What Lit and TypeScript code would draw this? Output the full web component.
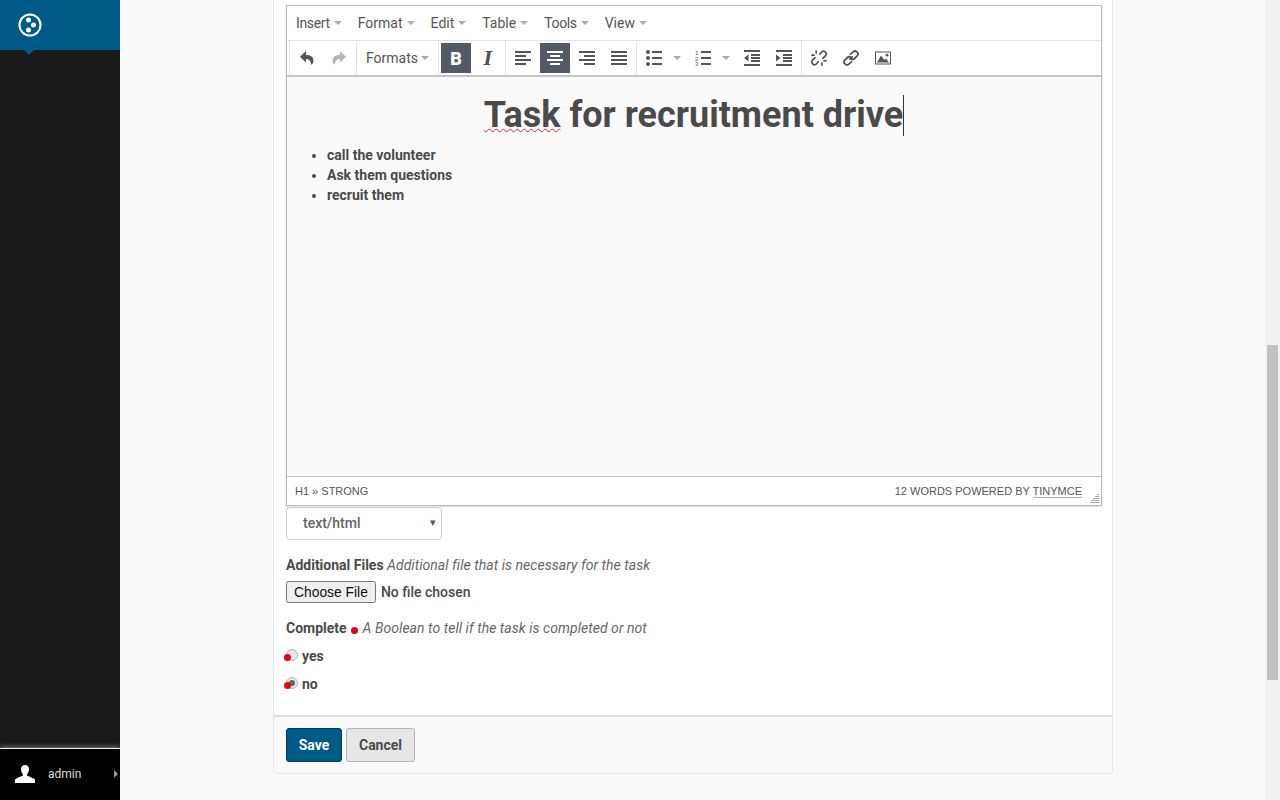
import { LitElement, html, css, svg } from 'lit';
import { customElement } from 'lit/decorators.js';

// toolbar glyphs, all on a 16x16 box
const lines = (rows: number[][]) =>
    rows.map(([x, y, w]) => svg`<rect x=${x} y=${y} width=${w} height="2"></rect>`);

const icons: Record<string, unknown> = {
    undo: svg`<path d="M7 1 1 6.800 7 12.500V9c2.800 0 4.500 1.500 5.500 6 1.900-2 2.400-4.200 1.700-6.300C13.300 6 10.600 4.800 7 5z"></path>`,
    redo: svg`<path d="M9 1 15 6.800 9 12.500V9c-2.800 0-4.500 1.500-5.500 6-1.900-2-2.400-4.200-1.700-6.300C2.700 6 5.400 4.800 9 5z"></path>`,
    left: lines([[0, 1, 16], [0, 5, 11], [0, 9, 16], [0, 13, 11]]),
    center: lines([[0, 1, 16], [3, 5, 10], [0, 9, 16], [3, 13, 10]]),
    right: lines([[0, 1, 16], [5, 5, 11], [0, 9, 16], [5, 13, 11]]),
    justify: lines([[0, 1, 16], [0, 5, 16], [0, 9, 16], [0, 13, 16]]),
    bullets: svg`<circle cx="2" cy="2" r="2"></circle><circle cx="2" cy="8" r="2"></circle><circle cx="2" cy="14" r="2"></circle>${lines([[6, 1, 10], [6, 7, 10], [6, 13, 10]])}`,
    numbers: svg`<text x="0" y="5" font-size="6" font-family="Liberation Sans">1</text><text x="0" y="10.500" font-size="6" font-family="Liberation Sans">2</text><text x="0" y="16" font-size="6" font-family="Liberation Sans">3</text>${lines([[6, 1, 10], [6, 7, 10], [6, 13, 10]])}`,
    outdent: svg`${lines([[0, 0, 16], [7, 4, 9], [7, 7, 9], [7, 10, 9], [0, 14, 16]])}<path d="M0 8 4.500 4.500v7z"></path>`,
    indent: svg`${lines([[0, 0, 16], [7, 4, 9], [7, 7, 9], [7, 10, 9], [0, 14, 16]])}<path d="M4.500 8 0 4.500v7z"></path>`,
    unlink: svg`<g fill="none" stroke="#555" stroke-width="1.700" stroke-linecap="round"><path d="M8.800 4.300 10.600 2.200a2.700 2.700 0 0 1 3.700-.2 2.700 2.700 0 0 1 .1 3.800L12 8.300"></path><path d="M7.200 11.700 5.400 13.800a2.700 2.700 0 0 1-3.700.2 2.700 2.700 0 0 1-.1-3.800L4 7.700"></path><path d="M5.200 1v2M1 5.200h2M10.800 15v-2M15 10.800h-2"></path></g>`,
    link: svg`<g fill="none" stroke="#555" stroke-width="1.800" stroke-linecap="round"><path d="M7 9 9.200 6.800"></path><path d="M7.500 4.200 10.200 1.800a2.500 2.500 0 0 1 3.500 0l.5.500a2.500 2.500 0 0 1 0 3.500L11.500 8.500a2.500 2.500 0 0 1-3 .4"></path><path d="M8.500 11.800 5.800 14.200a2.500 2.500 0 0 1-3.500 0l-.5-.5a2.500 2.500 0 0 1 0-3.500L4.500 7.500a2.500 2.500 0 0 1 3-.4"></path></g>`,
    image: svg`<path fill-rule="evenodd" d="M0 1.500h16v13H0zM1 2.500v11h14v-11z"></path><path d="M2 12.500 6 5.500l3.500 4.500 1.500-1.500 3 4z"></path><circle cx="12" cy="5.200" r="1.400"></circle>`,
};

@customElement('app-root')
export class AppRoot extends LitElement {
    static styles = css`
        :host {
            display: flex;
            height: 800px;
            overflow: hidden;
            background: #fafafa;
            font-family: Roboto, "Liberation Sans", sans-serif;
            font-size: 14px;
            color: #4a4a4a;
        }

        /* sidebar */
        .sidebar {
            width: 120px;
            flex: none;
            display: flex;
            flex-direction: column;
            background: #191919;
        }
        .brand {
            position: relative;
            height: 50px;
            background: #005a87;
            display: flex;
            align-items: center;
            padding-left: 18px;
        }
        .brand::after {
            content: "";
            position: absolute;
            left: 24px;
            top: 50px;
            border: 5px solid transparent;
            border-top-color: #005a87;
            border-bottom: 0;
        }
        .user {
            margin-top: auto;
            height: 49px;
            padding-bottom: 2px;
            background: #000;
            border-top: 1px solid #eee;
            box-shadow: 0 -1px 5px rgba(255, 255, 255, 0.45);
            display: flex;
            align-items: center;
            padding-left: 15px;
            color: #ddd;
            font-size: 12px;
        }
        .user span {
            margin-left: 13px;
        }
        .user .arrow {
            margin-left: auto;
            margin-right: 2px;
            border: 4px solid transparent;
            border-left: 4px solid #999;
            border-right: 0;
        }

        /* page */
        .main {
            flex: 1;
            min-width: 0;
            padding-left: 153px;
        }
        .card {
            width: 838px;
            height: 773px;
            background: #fff;
            border: 1px solid #e8e8e8;
            border-top: 0;
            border-radius: 0 0 4px 4px;
            display: flex;
            flex-direction: column;
        }
        .form {
            flex: 1;
            padding: 5px 10px 0 12px;
        }

        /* editor */
        .editor {
            border: 1px solid #b9b9b9;
            box-shadow: 0 1px 2px rgba(0, 0, 0, 0.15);
            height: 499px;
            display: flex;
            flex-direction: column;
        }
        .menubar {
            height: 34px;
            flex: none;
            border-bottom: 1px solid #e2e2e2;
            display: flex;
            align-items: center;
            padding-left: 9px;
            gap: 16px;
            color: #555;
        }
        .menu {
            display: flex;
            align-items: center;
            gap: 4px;
        }
        .menu.tight {
            letter-spacing: -0.35px;
        }
        .caret {
            border: 4px solid transparent;
            border-top-color: #aaa;
            border-bottom: 0;
            flex: none;
        }
        .toolbar {
            height: 34px;
            flex: none;
            border-bottom: 2px solid #c5c5c5;
            display: flex;
            padding-left: 2px;
        }
        .group {
            display: flex;
            align-items: center;
            border-left: 1px solid #e2e2e2;
            padding: 0 1px;
        }
        .btn {
            width: 32px;
            height: 30px;
            padding: 0 1px;
            box-sizing: border-box;
            display: flex;
            align-items: center;
            justify-content: center;
        }
        .btn > div {
            width: 30px;
            height: 30px;
            display: flex;
            align-items: center;
            justify-content: center;
        }
        .btn svg {
            width: 16px;
            height: 16px;
            fill: #555;
        }
        .btn.off svg {
            fill: #b5b5b5;
        }
        .btn.on > div {
            background: #535a66;
        }
        .btn.on svg {
            fill: #fff;
        }
        .btn.split {
            width: 49px;
            justify-content: flex-start;
        }
        .btn.split .caret {
            margin-left: 4px;
        }
        .btn.split > div {
            width: 30px;
            flex: none;
        }
        .glyph {
            font-family: "DejaVu Serif", serif;
            font-size: 18px;
            color: #555;
        }
        .on .glyph {
            font-family: Roboto, sans-serif;
            font-weight: 900;
            color: #fff;
            font-size: 18px;
        }
        .italic {
            font-style: italic;
            font-weight: 700;
        }
        .formats {
            width: 79px;
            box-sizing: border-box;
            padding-left: 8px;
            display: flex;
            align-items: center;
            gap: 3px;
            color: #555;
        }
        .content {
            flex: 1;
            min-height: 0;
            background: #fafafa;
            overflow: hidden;
        }
        .content h1 {
            margin: 17px 0 0;
            font-size: 36px;
            line-height: 42px;
            font-weight: 700;
            text-align: center;
        }
        .content h1 u {
            text-decoration: underline wavy #f0202a 1px;
            text-underline-offset: 1px;
        }
        .cursor {
            display: inline-block;
            width: 1px;
            height: 41px;
            background: #333;
            vertical-align: -9px;
        }
        .content ul {
            margin: 9px 0 0;
            padding-left: 40px;
            font-weight: 700;
            line-height: 20px;
        }
        .status {
            height: 28px;
            flex: none;
            border-top: 1px solid #c5c5c5;
            display: flex;
            align-items: center;
            justify-content: space-between;
            padding: 0 19px 0 8px;
            font-family: "Liberation Sans", sans-serif;
            font-size: 11px;
            color: #555;
            position: relative;
        }
        .status u {
            text-decoration: none;
            border-bottom: 1px solid #aaa;
        }
        .grip {
            position: absolute;
            right: 1px;
            bottom: 2px;
            width: 10px;
            height: 10px;
        }

        /* fields */
        .select {
            margin-top: 1px;
            width: 156px;
            height: 33px;
            box-sizing: border-box;
            border: 1px solid #ccc;
            border-radius: 4px;
            display: flex;
            align-items: center;
            justify-content: space-between;
            padding: 0 5px 2px 16px;
            font-weight: 500;
            color: #666;
        }
        .select i {
            font-style: normal;
            font-size: 11px;
            color: #555;
        }
        .field-label {
            font-weight: 700;
            line-height: 20px;
        }
        .field-label em {
            font-weight: 400;
            color: #666;
            letter-spacing: 0.04px;
        }
        .files {
            margin-top: 15px;
        }
        input[type="file"] {
            display: block;
            margin-top: 6px;
            font-family: Roboto, sans-serif;
            font-size: 14px;
            font-weight: 500;
            color: #4a4a4a;
        }
        input[type="file"]::file-selector-button {
            font-family: "Liberation Sans", sans-serif;
            font-size: 13.850px;
            font-weight: 400;
            color: #111;
            margin-right: 5px;
        }
        .complete {
            margin-top: 15px;
        }
        .dot {
            display: inline-block;
            width: 7px;
            height: 7px;
            border-radius: 50%;
            background: #e2001a;
            vertical-align: -1px;
            margin: 0 1px;
        }
        .radio {
            position: relative;
            display: flex;
            align-items: center;
            height: 28px;
            font-weight: 700;
        }
        .radios {
            margin-top: 4px;
        }
        .radio input {
            appearance: none;
            box-sizing: border-box;
            margin: -3px 4px 0 0;
            width: 12px;
            height: 12px;
            border-radius: 50%;
            border: 1px solid #b5b5b5;
            background: #e8e8e8;
            display: grid;
            place-items: center;
        }
        .radio input:checked::before {
            content: "";
            width: 6px;
            height: 6px;
            border-radius: 50%;
            background: #666;
        }
        .radio .dot {
            position: absolute;
            left: -2px;
            top: 12px;
            margin: 0;
        }
        .actions {
            height: 58px;
            flex: none;
            box-sizing: border-box;
            background: #fafafa;
            border-top: 2px solid #ddd;
            border-radius: 0 0 4px 4px;
            padding: 11px 12px;
            display: flex;
            gap: 4px;
        }
        .actions button {
            height: 34px;
            box-sizing: border-box;
            border-radius: 3px;
            font: 700 14px Roboto, sans-serif;
            padding: 0;
        }
        .save {
            width: 56px;
            background: #005a87;
            border: 1px solid #003d5c;
            color: #fff;
        }
        .cancel {
            width: 69px;
            background: #e6e6e6;
            border: 1px solid #b3b3b3;
            color: #4a4a4a;
        }

        /* scrollbar */
        .scrollbar {
            width: 15px;
            flex: none;
            box-sizing: border-box;
            background: #f1f1f1;
            padding: 345px 2px 0;
        }
        .scrollbar div {
            height: 335px;
            background: #c1c1c1;
        }
    `;

    private _icon(name: string) {
        return html`<svg viewBox="0 0 16 16">${icons[name]}</svg>`;
    }

    private _btn(name: string, cls = '') {
        return html`<div class="btn ${cls}"><div>${this._icon(name)}</div></div>`;
    }

    private _split(name: string) {
        return html`<div class="btn split"><div>${this._icon(name)}</div><span class="caret"></span></div>`;
    }

    render() {
        const menus = ['Insert', 'Format', 'Edit', 'Table', 'Tools', 'View'];
        const tight = ['Insert', 'Tools'];
        return html`
            <aside class="sidebar">
                <div class="brand">
                    <svg width="24" height="24" viewBox="0 0 24 24">
                        <circle cx="12" cy="12" r="10.500" fill="none" stroke="#fff" stroke-width="2"></circle>
                        <circle cx="10.500" cy="7" r="2.500" fill="#fff"></circle>
                        <circle cx="15.500" cy="12" r="2.500" fill="#fff"></circle>
                        <circle cx="10.500" cy="17" r="2.500" fill="#fff"></circle>
                    </svg>
                </div>
                <div class="user">
                    <svg width="20" height="18" viewBox="0 0 20 18" fill="#fff">
                        <path d="M10 0c2.600 0 4 1.900 4 4.300 0 2-.8 3.700-1.800 4.700v1.700c2.600.9 6.300 2.300 7.800 3.800V18H0v-3.500c1.500-1.500 5.200-2.900 7.800-3.800V9C6.800 8 6 6.300 6 4.300 6 1.900 7.400 0 10 0z"></path>
                    </svg>
                    <span>admin</span>
                    <div class="arrow"></div>
                </div>
            </aside>

            <main class="main">
                <section class="card">
                    <div class="form">
                        <div class="editor">
                            <div class="menubar">
                                ${menus.map((m) => html`<div class="menu ${tight.includes(m) ? 'tight' : ''}">${m}<span class="caret"></span></div>`)}
                            </div>
                            <div class="toolbar">
                                <div class="group">${this._btn('undo')}${this._btn('redo', 'off')}</div>
                                <div class="group">
                                    <div class="formats">Formats<span class="caret"></span></div>
                                </div>
                                <div class="group">
                                    <div class="btn on"><div><span class="glyph">B</span></div></div>
                                    <div class="btn"><div><span class="glyph italic">I</span></div></div>
                                </div>
                                <div class="group">
                                    ${this._btn('left')}${this._btn('center', 'on')}${this._btn('right')}${this._btn('justify')}
                                </div>
                                <div class="group">
                                    ${this._split('bullets')}${this._split('numbers')}${this._btn('outdent')}${this._btn('indent')}
                                </div>
                                <div class="group">${this._btn('unlink')}${this._btn('link')}${this._btn('image')}</div>
                            </div>
                            <div class="content">
                                <h1><u>Task</u> for recruitment drive<span class="cursor"></span></h1>
                                <ul>
                                    <li>call the volunteer</li>
                                    <li>Ask them questions</li>
                                    <li>recruit them</li>
                                </ul>
                            </div>
                            <div class="status">
                                <span>H1 » STRONG</span>
                                <span>12 WORDS POWERED BY <u>TINYMCE</u></span>
                                <svg class="grip" viewBox="0 0 10 10" fill="#aaa">
                                    <rect x="7" y="1" width="2" height="1"></rect>
                                    <rect x="5" y="3" width="4" height="1"></rect>
                                    <rect x="3" y="5" width="6" height="1"></rect>
                                    <rect x="1" y="7" width="8" height="1"></rect>
                                    <rect x="0" y="9" width="10" height="1"></rect>
                                </svg>
                            </div>
                        </div>

                        <div class="select">text/html<i>▾</i></div>

                        <div class="files">
                            <div class="field-label">Additional Files <em>Additional file that is necessary for the task</em></div>
                            <input type="file" />
                        </div>

                        <div class="complete">
                            <div class="field-label">Complete <span class="dot"></span> <em>A Boolean to tell if the task is completed or not</em></div>
                            <div class="radios">
                                <label class="radio"><input type="radio" name="complete" /><span class="dot"></span>yes</label>
                                <label class="radio"><input type="radio" name="complete" checked /><span class="dot"></span>no</label>
                            </div>
                        </div>
                    </div>
                    <div class="actions">
                        <button class="save">Save</button>
                        <button class="cancel">Cancel</button>
                    </div>
                </section>
            </main>

            <div class="scrollbar"><div></div></div>
        `;
    }
}
